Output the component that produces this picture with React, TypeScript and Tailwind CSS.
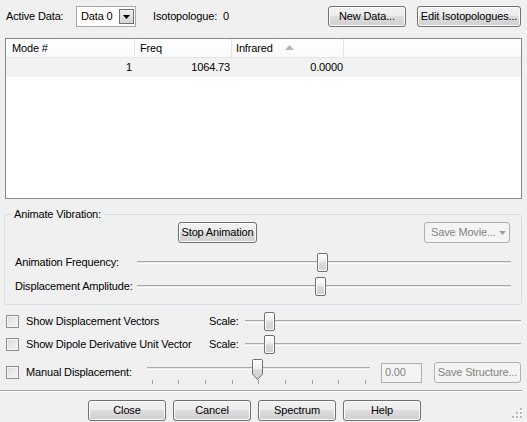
import React from 'react'

function Btn({ children, className = '', disabled = false }: { children: React.ReactNode; className?: string; disabled?: boolean }) {
  return (
    <div
      className={
        'h-[21px] flex items-center justify-center rounded-[3px] border whitespace-nowrap ' +
        (disabled
          ? 'border-[#adb2b5] bg-[#f4f4f4] text-[#838383] '
          : 'border-[#707070] bg-[linear-gradient(#f2f2f2_0%,#ebebeb_50%,#dddddd_50%,#cfcfcf_100%)] shadow-[inset_0_0_0_1px_#fbfbfb] ') +
        className
      }
    >
      {children}
    </div>
  )
}

function Thumb({ left, top }: { left: number; top: number }) {
  return (
    <div
      className="absolute w-[11px] h-[19px] rounded-[2px] border border-[#707070] bg-[linear-gradient(#fefefe_0%,#f0f0f0_40%,#d8d8d8_55%,#d2d2d2_100%)] shadow-[inset_0_0_0_1px_#ffffff]"
      style={{ left, top }}
    />
  )
}

function Slider({ width, thumb }: { width: number; thumb: number }) {
  return (
    <div className="relative h-[19px]" style={{ width }}>
      <div className="absolute left-0 right-0 top-[8px] h-[3px] border-t border-[#a8a8a8] border-b border-b-white bg-[#e6e6e6]" />
      <Thumb left={thumb} top={0} />
    </div>
  )
}

function Check() {
  return (
    <div className="w-[13px] h-[13px] border border-[#8e8f8f] bg-[linear-gradient(135deg,#dcdcdc,#f6f6f6)] shadow-[inset_0_0_0_1px_#f4f4f4]" />
  )
}

const ticks = [5, 31, 58, 85, 111, 138, 165, 191, 218]

export default function App() {
  return (
    <div className="w-[527px] h-[422px] bg-[#f0f0f0] text-[11px] leading-[13px] tracking-[-0.15px] text-black relative overflow-hidden flex flex-col font-['Liberation_Sans',Arial,sans-serif]">
      {/* top row */}
      <div className="flex items-center h-[21px] mt-[6px]">
        <span className="ml-[6px] w-[70px]">Active Data:</span>
        <div className="w-[60px] h-[21px] border border-[#a9a9a9] bg-white flex items-center relative">
          <span className="ml-[4px]">Data 0</span>
          <div className="absolute right-[1px] top-[2px] w-[15px] h-[15px] border border-[#707070] bg-[linear-gradient(#f0f0f0,#d4d4d4)] flex items-center justify-center">
            <svg width="7" height="4" viewBox="0 0 7 4">
              <path d="M0 0h7L3.5 4z" fill="#000" />
            </svg>
          </div>
        </div>
        <span className="ml-[17px]">Isotopologue:&nbsp; 0</span>
        <Btn className="ml-auto w-[78px]">New Data...</Btn>
        <Btn className="ml-[11px] mr-[6px] w-[104px]">Edit Isotopologues...</Btn>
      </div>

      {/* table */}
      <div className="mt-[11px] ml-[5px] w-[517px] h-[161px] border border-[#828790] bg-white">
        <div className="flex h-[19px] border-b border-[#e5e5e5] bg-[linear-gradient(#ffffff,#fafafa)]">
          <div className="w-[129px] border-r border-[#e5e5e5] pl-[6px] flex items-center">Mode #</div>
          <div className="w-[97px] border-r border-[#e5e5e5] pl-[5px] flex items-center">Freq</div>
          <div className="w-[112px] border-r border-[#e5e5e5] pl-[4px] flex items-center relative">
            Infrared
            <svg className="absolute left-[53px] top-[6px]" width="9" height="5" viewBox="0 0 9 5">
              <path d="M4.5 0L9 5H0z" fill="#b4b4b4" />
            </svg>
          </div>
          <div className="flex-1" />
        </div>
        <div className="flex h-[19px] bg-[#f2f2f2]">
          <div className="w-[129px] text-right pr-[3px] flex items-center justify-end">1</div>
          <div className="w-[97px] pr-[2px] flex items-center justify-end">1064.73</div>
          <div className="w-[112px] pr-[1px] flex items-center justify-end">0.0000</div>
          <div className="flex-1" />
        </div>
      </div>

      {/* group box */}
      <fieldset className="mt-[9px] ml-[4px] w-[518px] border border-[#d5dfe5] rounded-[3px] px-[7px] pb-[8px]">
        <legend className="px-[2px] leading-[13px]">Animate Vibration:</legend>
        <div className="flex items-center h-[21px] mt-[1px]">
          <Btn className="ml-[166px] w-[79px]">Stop Animation</Btn>
          <Btn disabled className="ml-auto mr-[4px] w-[86px] justify-start pl-[6px] relative">
            Save Movie...
            <svg className="absolute right-[3px] top-[8px]" width="7" height="4" viewBox="0 0 7 4">
              <path d="M0 0h7L3.5 4z" fill="#a0a0a0" />
            </svg>
          </Btn>
        </div>
        <div className="flex items-center h-[19px] mt-[10px]">
          <span className="ml-[3px] w-[122px]">Animation Frequency:</span>
          <Slider width={374} thumb={180} />
        </div>
        <div className="flex items-center h-[19px] mt-[5px]">
          <span className="ml-[3px] w-[122px]">Displacement Amplitude:</span>
          <Slider width={374} thumb={178} />
        </div>
      </fieldset>

      {/* checkbox rows */}
      <div className="flex items-center h-[19px] mt-[7px]">
        <div className="ml-[6px]"><Check /></div>
        <span className="ml-[7px] w-[183px]">Show Displacement Vectors</span>
        <span className="w-[36px]">Scale:</span>
        <Slider width={276} thumb={19} />
      </div>
      <div className="flex items-center h-[19px] mt-[4px]">
        <div className="ml-[6px]"><Check /></div>
        <span className="ml-[7px] w-[183px]">Show Dipole Derivative Unit Vector</span>
        <span className="w-[36px]">Scale:</span>
        <Slider width={276} thumb={19} />
      </div>
      <div className="flex items-center h-[21px] mt-[8px]">
        <div className="ml-[6px]"><Check /></div>
        <span className="ml-[7px] w-[121px]">Manual Displacement:</span>
        <div className="relative w-[223px] h-[21px]">
          <div className="absolute left-0 right-0 top-[5px] h-[3px] border-t border-[#a8a8a8] border-b border-b-white bg-[#e6e6e6]" />
          <svg className="absolute left-[105px] top-[-3px]" width="11" height="21" viewBox="0 0 11 21">
            <defs>
              <linearGradient id="tg" x1="0" y1="0" x2="0" y2="1">
                <stop offset="0" stopColor="#fefefe" />
                <stop offset="0.45" stopColor="#f0f0f0" />
                <stop offset="0.55" stopColor="#d8d8d8" />
                <stop offset="1" stopColor="#d0d0d0" />
              </linearGradient>
            </defs>
            <path d="M1.5 0.5h8a1 1 0 0 1 1 1V15L5.5 20.5 0.5 15V1.5a1 1 0 0 1 1-1z" fill="url(#tg)" stroke="#707070" />
          </svg>
          {ticks.map((t) => (
            <div key={t} className="absolute top-[18px] w-[1px] h-[4px] bg-[#a0a0a0]" style={{ left: t }} />
          ))}
        </div>
        <div className="ml-[11px] w-[41px] h-[20px] border border-[#abadb3] bg-[#f4f4f4] text-[#838383] flex items-center pl-[3px]">0.00</div>
        <Btn disabled className="ml-[12px] w-[87px]">Save Structure...</Btn>
      </div>

      {/* separator */}
      <div className="mt-[7px] w-[522px] h-[1px] bg-[#a0a0a0]" />
      <div className="w-[522px] h-[1px] bg-white" />

      {/* bottom buttons */}
      <div className="flex gap-[7px] ml-[88px] mt-[8px]">
        <Btn className="w-[78px]">Close</Btn>
        <Btn className="w-[78px]">Cancel</Btn>
        <Btn className="w-[78px]">Spectrum</Btn>
        <Btn className="w-[78px]">Help</Btn>
      </div>

      {/* size grip */}
      <svg className="absolute right-[4px] bottom-[3px]" width="11" height="11" viewBox="0 0 11 11">
        {[
          [8, 0], [8, 4], [4, 4], [8, 8], [4, 8], [0, 8],
        ].map(([x, y]) => (
          <g key={`${x}-${y}`}>
            <rect x={x + 1} y={y + 1} width="2" height="2" fill="#ffffff" />
            <rect x={x} y={y} width="2" height="2" fill="#b8b8b8" />
          </g>
        ))}
      </svg>
    </div>
  )
}
